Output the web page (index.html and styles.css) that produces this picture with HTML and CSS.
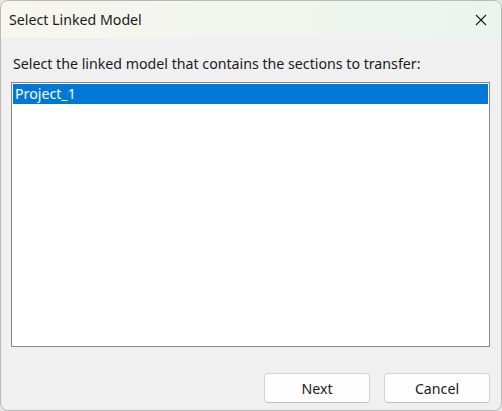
FILE: index.html
```html
<!DOCTYPE html>
<html>
	<head>
		<meta charset="utf-8" />
		<title>Select Linked Model</title>
		<link rel="stylesheet" href="styles.css">
	</head>
	<body>
		<div class="dialog">
			<div class="titlebar">
				<span class="title">Select Linked Model</span>
				<span class="close">
					<svg width="12" height="12" viewBox="0 0 12 12">
						<path d="M1 1L11 11M11 1L1 11" stroke="#1a1a1a" stroke-width="1.1" fill="none"/>
					</svg>
				</span>
			</div>
			<div class="content">
				<p class="prompt">Select the linked model that contains the sections to transfer:</p>
				<ul class="list">
					<li class="on">Project_1</li>
				</ul>
				<div class="buttons">
					<button class="btn">Next</button>
					<button class="btn">Cancel</button>
				</div>
			</div>
		</div>
	</body>
</html>
```

FILE: styles.css
```css
*{
	margin: 0;
	padding: 0;
	box-sizing: border-box;
}
body{
	width: 502px;
	height: 411px;
	background: #e6e6e6;
	font-family: "Noto Sans", "Open Sans", sans-serif;
	overflow: hidden;
}
.dialog{
	width: 502px;
	height: 411px;
	border: 1px solid #b9b9b9;
	border-radius: 8px;
	background: #f0f0f0;
	overflow: hidden;
	display: flex;
	flex-direction: column;
}
.titlebar{
	height: 37px;
	display: flex;
	align-items: center;
	justify-content: space-between;
	padding: 0 14px 0 8px;
	background: linear-gradient(90deg, #f7f6ef 0%, #f2f6ee 50%, #eaf5ef 100%);
}
.title{
	font-size: 14.2px;
	color: #1a1a1a;
	margin-top: -1px;
}
.close{
	display: flex;
	width: 12px;
	height: 12px;
}
.content{
	flex: 1;
	display: flex;
	flex-direction: column;
	padding: 16px 11px 7px 10px;
}
.prompt{
	font-size: 14.2px;
	color: #1a1a1a;
	padding-left: 2px;
	margin-bottom: 9px;
}
.list{
	list-style: none;
	height: 265px;
	border: 1px solid #828790;
	background: #fff;
	padding: 1px;
}
.list li{
	height: 20px;
	line-height: 20px;
	padding-left: 2px;
	font-size: 14.2px;
	color: #000;
}
.list .on{
	background: #0078d7;
	color: #fff;
}
.buttons{
	margin-top: auto;
	display: flex;
	justify-content: flex-end;
	gap: 14px;
}
.btn{
	width: 106px;
	height: 30px;
	border: 1px solid #d3d3d3;
	border-bottom-color: #c2c2c2;
	border-radius: 4px;
	background: #fdfdfd;
	font-family: inherit;
	font-size: 14.2px;
	color: #1a1a1a;
}
```
